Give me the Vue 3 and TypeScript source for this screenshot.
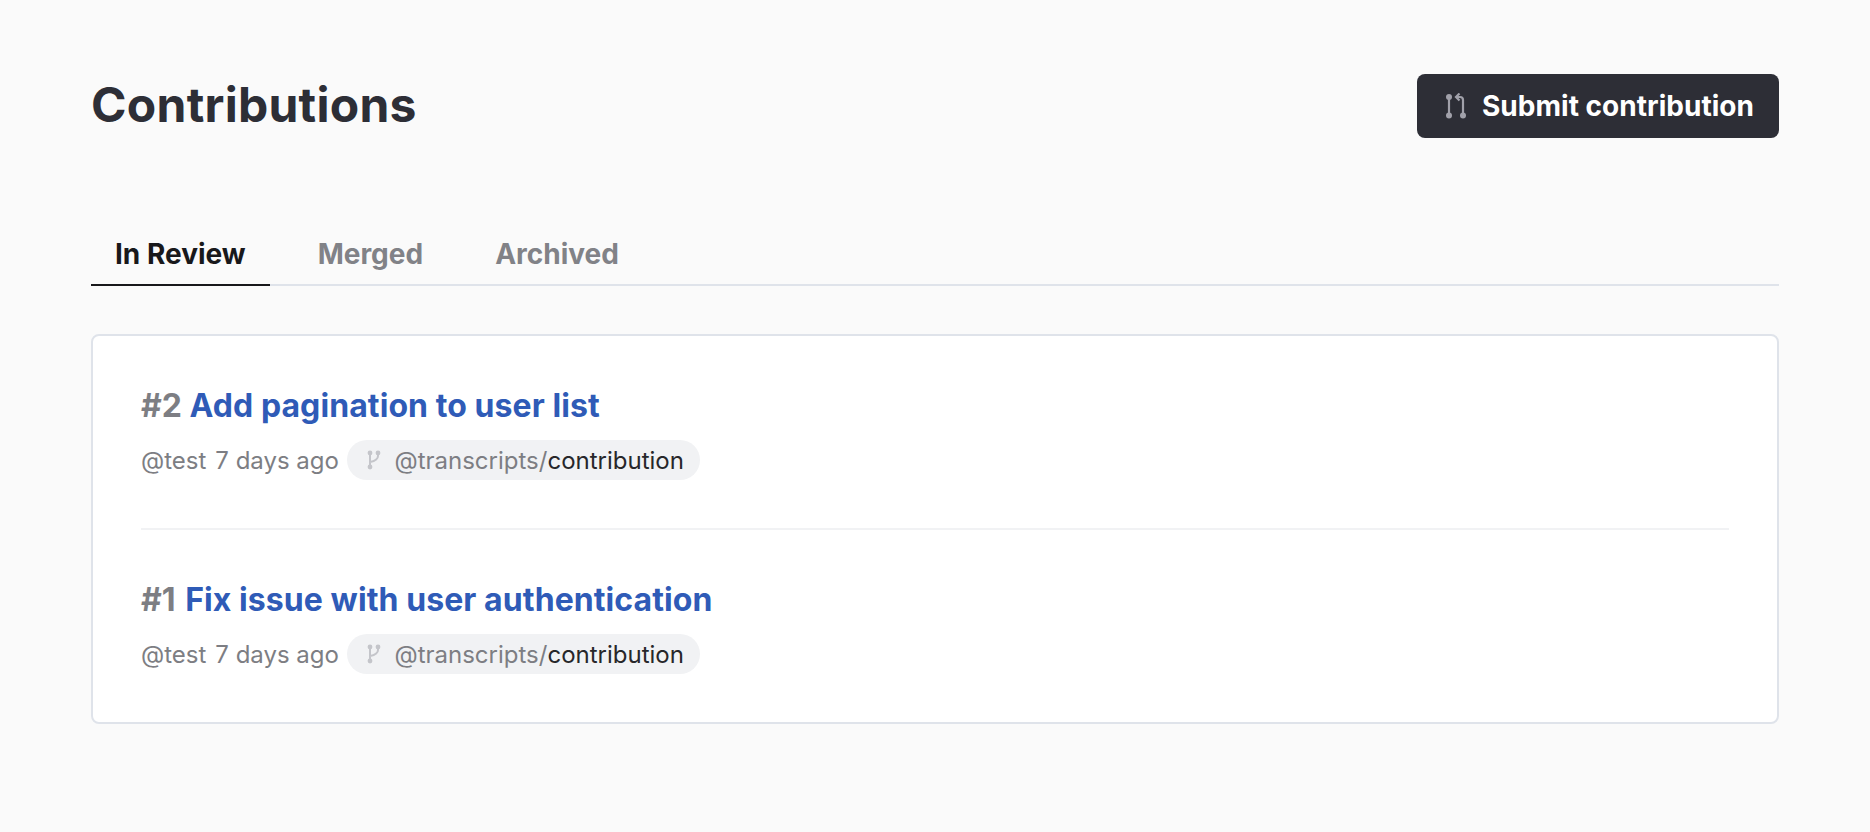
<script setup lang="ts">
interface Item { num: number; title: string }
const items: Item[] = [
  { num: 2, title: 'Add pagination to user list' },
  { num: 1, title: 'Fix issue with user authentication' },
]
const tabs = ['In Review', 'Merged', 'Archived']
</script>

<template>
  <div class="page">
    <header class="head">
      <h1 class="title">Contributions</h1>
      <button class="submit" type="button">
        <svg class="pr-icon" viewBox="0 0 20 26" width="20" height="26" fill="none">
          <circle cx="3" cy="4" r="3" fill="#a1a1aa" />
          <circle cx="3" cy="22.5" r="3" fill="#a1a1aa" />
          <circle cx="17" cy="22.5" r="3" fill="#a1a1aa" />
          <path d="M3 4V22M17 22V7C17 5 16 4 14 4H10M13.5 0.5L10 4L13.5 7.5" stroke="#a1a1aa" stroke-width="2.2" />
        </svg>
        <span>Submit contribution</span>
      </button>
    </header>

    <nav class="tabs">
      <a v-for="(t, i) in tabs" :key="t" class="tab" :class="{ active: i === 0 }">{{ t }}</a>
    </nav>

    <section class="card">
      <article v-for="it in items" :key="it.num" class="row">
        <h2 class="row-title"><span class="num" :class="{ wide: it.num === 1 }">#{{ it.num }}</span> <a class="link">{{ it.title }}</a></h2>
        <div class="meta">
          <span class="who first">@test</span>
          <span class="who">7 days ago</span>
          <span class="pill">
            <svg class="branch" viewBox="0 0 14 20" width="14" height="20" fill="none">
              <circle cx="3" cy="3" r="2.4" fill="#c4c5ca" />
              <circle cx="3" cy="17" r="2.4" fill="#c4c5ca" />
              <circle cx="11" cy="3" r="2.4" fill="#c4c5ca" />
              <path d="M3 3V17M11 3V6C11 9 8 11 3 12" stroke="#c4c5ca" stroke-width="2" />
            </svg>
            <span class="repo">@transcripts/<span class="br">contribution</span></span>
          </span>
        </div>
      </article>
    </section>
  </div>
</template>

<style>
html, body { margin: 0; background: #fafafa; }
</style>

<style scoped>
.page {
  box-sizing: border-box;
  width: 1870px;
  min-height: 832px;
  padding: 74px 91px 0 91px;
  background: #fafafa;
  font-family: Inter, "Liberation Sans", sans-serif;
}
.head { display: flex; justify-content: space-between; align-items: center; height: 64px; }
.title { margin: 0 0 4px; font-size: 48px; font-weight: 700; letter-spacing: 0.27px; color: #2d2e36; }
.submit {
  display: flex; align-items: center; gap: 16px;
  height: 64px; padding: 0 25px 0 29px;
  background: #2d2e36; border: 0; border-radius: 8px;
  color: #fff; font: 700 28px Inter, sans-serif;
  letter-spacing: 0.03px;
}
.tabs { display: flex; gap: 24px; margin-top: 70px; border-bottom: 2px solid #dfe3ea; height: 76px; }
.tab {
  box-sizing: content-box; padding: 8px 24px 0; height: 68px; line-height: 76px;
  font-size: 28px; font-weight: 700; color: #818287;
}
.tab.active { color: #18181b; border-bottom: 2px solid #18181b; }
.card {
  box-sizing: border-box;
  margin-top: 48px; padding: 0 48px;
  background: #fff; border: 2px solid #dfe3ea; border-radius: 8px;
}
.row { padding: 50px 0 48px; }
.row + .row { border-top: 2px solid #f1f2f4; }
.row-title { margin: 0; font-size: 32px; font-weight: 700; line-height: 40px; }
.num { color: #7d7e83; }
.num.wide { padding-right: 2px; }
.link { color: #2f5bb7; letter-spacing: 0.08px; }
.meta { display: flex; align-items: center; gap: 8px; margin-top: 14px; font-size: 24px; color: #7d7e83; }
.first { margin-right: 1px; }
.pill { display: flex; align-items: center; gap: 13.5px; height: 40px; padding: 0 16.5px 0 20px; background: #f1f2f4; border-radius: 20px; }
.branch { flex: none; }
.br { color: #27272a; }
</style>
